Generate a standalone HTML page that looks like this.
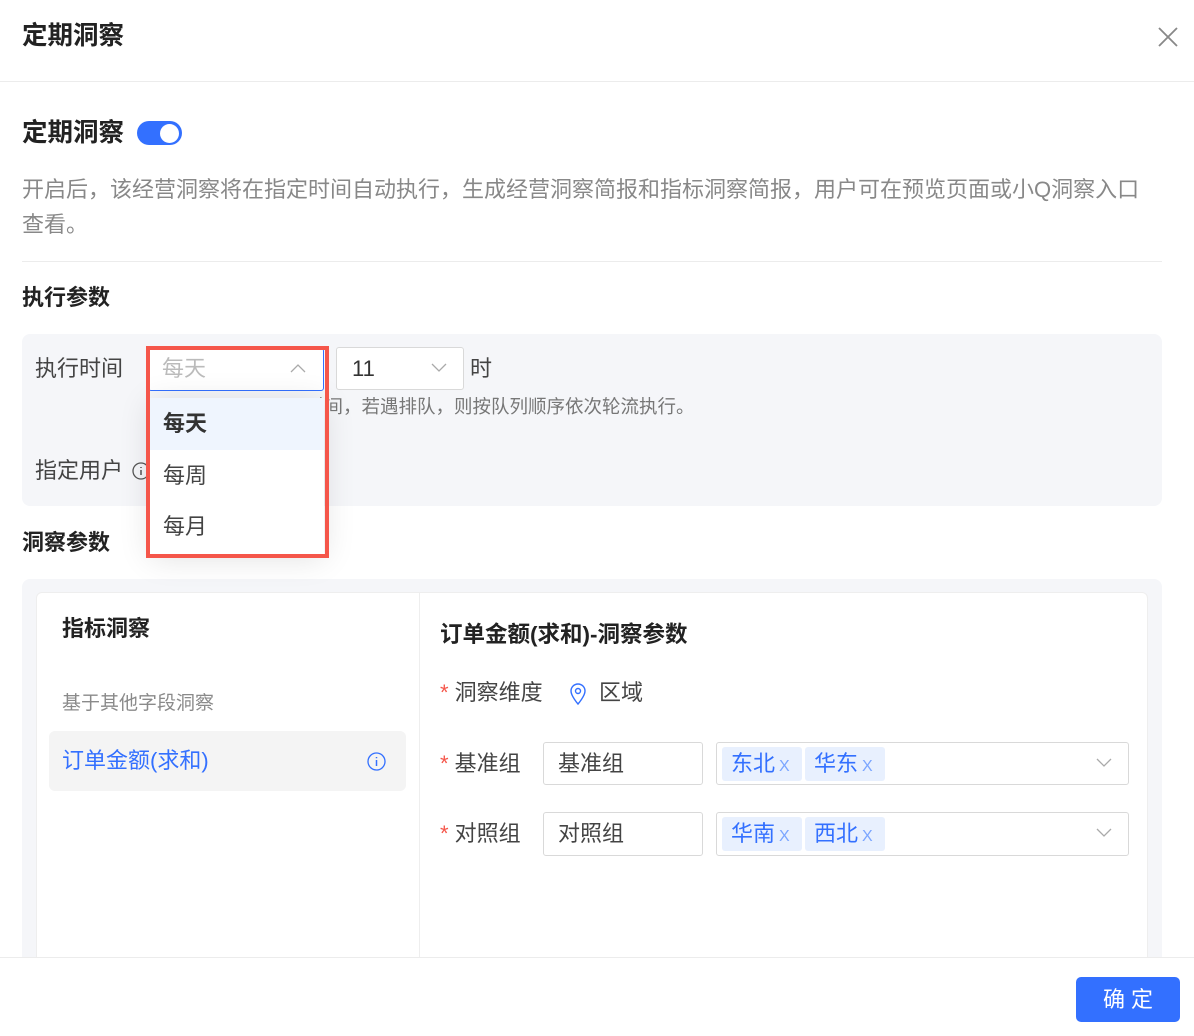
<!DOCTYPE html>
<html><head><meta charset="utf-8"><style>
*{margin:0;padding:0;box-sizing:border-box}
body{width:1194px;height:1036px;overflow:hidden;background:#fff;font-family:"Liberation Sans","Noto Sans CJK SC",sans-serif;color:#333;position:relative}
.a{position:absolute;white-space:nowrap}
.b{font-weight:bold;color:#222}
.box{position:absolute;border:1px solid #d9d9d9;border-radius:3px;background:#fff}
.tag{position:absolute;top:4px;height:34px;width:80px;background:#e8f0fe;border-radius:3px;color:#3370ff;font-size:22px;line-height:34px;padding-left:9px}
.tag i{font-style:normal;color:#7aa5ff;font-size:16px;margin-left:4px}
.star{color:#f5564a}
.t{font-size:22px;line-height:30px}
</style></head><body>
<div class="a b" style="left:22px;top:19px;font-size:25.5px;line-height:34px">定期洞察</div>
<svg class="a" style="left:1158px;top:27px" width="20" height="20"><path d="M1 1L19 19M19 1L1 19" stroke="#888" stroke-width="1.8"/></svg>
<div class="a" style="left:0;top:81px;width:1194px;height:1px;background:#ececec"></div>

<div class="a b" style="left:22px;top:116px;font-size:25.5px;line-height:34px">定期洞察</div>
<div class="a" style="left:137px;top:121px;width:45px;height:24px;border-radius:12px;background:#3370ff"></div>
<div class="a" style="left:160px;top:124px;width:19px;height:19px;border-radius:50%;background:#fff"></div>
<div class="a" style="left:22px;top:172px;font-size:22px;line-height:35px;color:#888">开启后，该经营洞察将在指定时间自动执行，生成经营洞察简报和指标洞察简报，用户可在预览页面或小Q洞察入口<br>查看。</div>
<div class="a" style="left:22px;top:261px;width:1140px;height:1px;background:#ececec"></div>

<div class="a b t" style="left:22px;top:283px">执行参数</div>
<div class="a" style="left:22px;top:334px;width:1140px;height:172px;background:#f5f6f9;border-radius:8px"></div>
<div class="a t" style="left:35px;top:354px;color:#444">执行时间</div>
<div class="box" style="left:148px;top:348px;width:176px;height:43px;border-color:#3370ff"></div>
<div class="a t" style="left:162px;top:354px;color:#bbb">每天</div>
<svg class="a" style="left:290px;top:363px" width="16" height="10"><path d="M1 9L8 2L15 9" stroke="#aaa" fill="none" stroke-width="1.3"/></svg>
<div class="box" style="left:336px;top:347px;width:128px;height:43px"></div>
<div class="a t" style="left:352px;top:354px;color:#333">11</div>
<svg class="a" style="left:431px;top:363px" width="16" height="10"><path d="M1 1L8 8L15 1" stroke="#aaa" fill="none" stroke-width="1.3"/></svg>
<div class="a t" style="left:470px;top:354px;color:#444">时</div>
<div class="a" style="left:306px;top:393px;font-size:18.5px;line-height:28px;color:#777">时间，若遇排队，则按队列顺序依次轮流执行。</div>
<div class="a t" style="left:35px;top:456px;color:#444">指定用户</div>
<svg class="a" style="left:132px;top:462px" width="18" height="18"><circle cx="9" cy="9" r="8" stroke="#555" fill="none" stroke-width="1.3"/><path d="M9 8V13M9 5V6" stroke="#555" stroke-width="1.5"/></svg>

<div class="a b t" style="left:22px;top:528px">洞察参数</div>
<div class="a" style="left:22px;top:579px;width:1140px;height:400px;background:#f5f6f9;border-radius:8px"></div>
<div class="a" style="left:36px;top:592px;width:1112px;height:400px;background:#fff;border:1px solid #eee;border-radius:6px"></div>
<div class="a" style="left:419px;top:593px;width:1px;height:370px;background:#eee"></div>
<div class="a b t" style="left:62px;top:614px">指标洞察</div>
<div class="a" style="left:62px;top:690px;font-size:19px;line-height:28px;color:#8a8a8a">基于其他字段洞察</div>
<div class="a" style="left:49px;top:731px;width:357px;height:60px;background:#f4f4f4;border-radius:6px"></div>
<div class="a t" style="left:62px;top:746px;color:#3370ff">订单金额(求和)</div>
<svg class="a" style="left:367px;top:752px" width="19" height="19"><circle cx="9.5" cy="9.5" r="8.5" stroke="#3370ff" fill="none" stroke-width="1.3"/><path d="M9.5 8V14M9.5 5V6.3" stroke="#3370ff" stroke-width="1.5"/></svg>

<div class="a b t" style="left:440px;top:620px;font-size:22.5px">订单金额(求和)-洞察参数</div>
<div class="a t" style="left:440px;top:678px;color:#444"><span class="star">*</span> 洞察维度</div>
<svg class="a" style="left:568px;top:682px" width="20" height="24"><path d="M10 22C10 22 3 14 3 9A7 7 0 0 1 17 9C17 14 10 22 10 22Z" stroke="#3370ff" fill="none" stroke-width="1.4"/><circle cx="10" cy="9" r="2.5" stroke="#3370ff" fill="none" stroke-width="1.4"/></svg>
<div class="a t" style="left:599px;top:678px;color:#444">区域</div>

<div class="a t" style="left:440px;top:749px;color:#444"><span class="star">*</span> 基准组</div>
<div class="box" style="left:543px;top:742px;width:160px;height:43px"></div>
<div class="a t" style="left:558px;top:749px;color:#444">基准组</div>
<div class="box" style="left:716px;top:742px;width:413px;height:43px"><div class="tag" style="left:5px">东北<i>X</i></div><div class="tag" style="left:88px">华东<i>X</i></div>
<svg style="position:absolute;left:379px;top:15px" width="16" height="10"><path d="M1 1L8 8L15 1" stroke="#aaa" fill="none" stroke-width="1.3"/></svg></div>

<div class="a t" style="left:440px;top:819px;color:#444"><span class="star">*</span> 对照组</div>
<div class="box" style="left:543px;top:812px;width:160px;height:44px"></div>
<div class="a t" style="left:558px;top:819px;color:#444">对照组</div>
<div class="box" style="left:716px;top:812px;width:413px;height:44px"><div class="tag" style="left:5px">华南<i>X</i></div><div class="tag" style="left:88px">西北<i>X</i></div>
<svg style="position:absolute;left:379px;top:15px" width="16" height="10"><path d="M1 1L8 8L15 1" stroke="#aaa" fill="none" stroke-width="1.3"/></svg></div>

<div class="a" style="left:0;top:957px;width:1194px;height:79px;background:#fff;border-top:1px solid #ececec"></div>
<div class="a" style="left:1076px;top:977px;width:104px;height:45px;background:#3370ff;border-radius:5px;color:#fff;font-size:22px;line-height:45px;text-align:center;letter-spacing:6px;padding-left:6px">确定</div>

<!-- dropdown -->
<div class="a" style="left:150px;top:398px;width:174px;height:156px;background:#fff;box-shadow:0 4px 30px rgba(0,0,0,.12)"></div>
<div class="a" style="left:150px;top:398px;width:174px;height:52px;background:#eff5fe"></div>
<div class="a b t" style="left:163px;top:409px;color:#333">每天</div>
<div class="a t" style="left:163px;top:461px;color:#444">每周</div>
<div class="a t" style="left:163px;top:512px;color:#444">每月</div>
<div class="a" style="left:146px;top:346px;width:183px;height:212px;border:4px solid #f5564a"></div>
</body></html>
